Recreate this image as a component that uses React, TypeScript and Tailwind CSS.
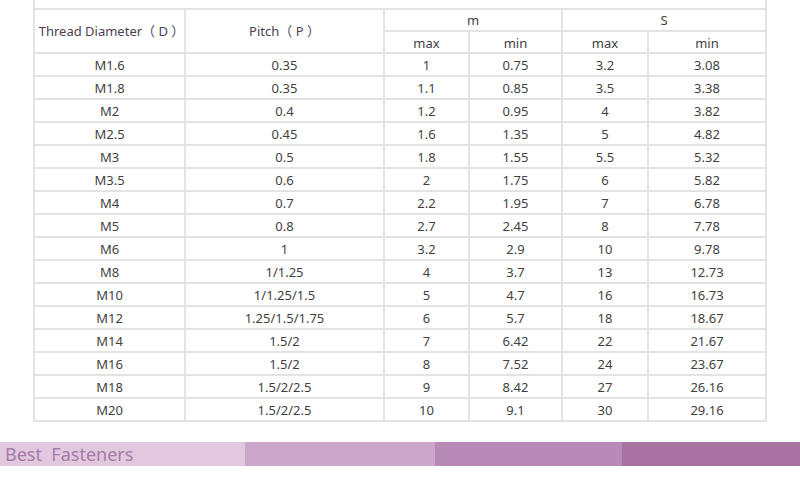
const rows: string[][] = [
  ['M1.6', '0.35', '1', '0.75', '3.2', '3.08'],
  ['M1.8', '0.35', '1.1', '0.85', '3.5', '3.38'],
  ['M2', '0.4', '1.2', '0.95', '4', '3.82'],
  ['M2.5', '0.45', '1.6', '1.35', '5', '4.82'],
  ['M3', '0.5', '1.8', '1.55', '5.5', '5.32'],
  ['M3.5', '0.6', '2', '1.75', '6', '5.82'],
  ['M4', '0.7', '2.2', '1.95', '7', '6.78'],
  ['M5', '0.8', '2.7', '2.45', '8', '7.78'],
  ['M6', '1', '3.2', '2.9', '10', '9.78'],
  ['M8', '1/1.25', '4', '3.7', '13', '12.73'],
  ['M10', '1/1.25/1.5', '5', '4.7', '16', '16.73'],
  ['M12', '1.25/1.5/1.75', '6', '5.7', '18', '18.67'],
  ['M14', '1.5/2', '7', '6.42', '22', '21.67'],
  ['M16', '1.5/2', '8', '7.52', '24', '23.67'],
  ['M18', '1.5/2/2.5', '9', '8.42', '27', '26.16'],
  ['M20', '1.5/2/2.5', '10', '9.1', '30', '29.16'],
];

export default function App() {
  return (
    <div
      className="h-[478px] w-[800px] bg-white"
      style={{ fontFamily: '"Noto Sans", "Noto Sans CJK SC", sans-serif' }}
    >
      {/* Spec table */}
      <div className="ml-[33px] w-[734px] bg-[#e3e3e3] px-[2px] pb-[2px]">
        <div className="grid grid-cols-[149px_197px_83px_91px_84px_116px] gap-[2px] text-[13px] leading-none text-[#3f3f3f]">
          <div className="col-span-6 h-[8px] bg-white" />

          <div className="row-span-2 flex items-center justify-center whitespace-pre bg-white pl-[4px] pt-[1px] text-[#4d3f52]">
            Thread Diameter（ D ）
          </div>
          <div className="row-span-2 flex items-center justify-center whitespace-pre bg-white pt-[1px] text-[#4d3f52]">
            Pitch（ P ）
          </div>
          <div className="col-span-2 flex h-[20px] items-center justify-center bg-white">m</div>
          <div className="col-span-2 flex h-[20px] items-center justify-center bg-white">S</div>
          <div className="flex h-[20px] items-center justify-center bg-white pt-[2px]">max</div>
          <div className="flex h-[20px] items-center justify-center bg-white pt-[2px]">min</div>
          <div className="flex h-[20px] items-center justify-center bg-white pt-[2px]">max</div>
          <div className="flex h-[20px] items-center justify-center bg-white pt-[2px]">min</div>

          {rows.map((r) =>
            r.map((v, i) => (
              <div key={r[0] + i} className="flex h-[21px] items-center justify-center bg-white pt-[2px]">
                {v}
              </div>
            ))
          )}
        </div>
      </div>

      {/* Footer bar */}
      <div className="mt-[20px] flex h-[24px]">
        <div className="flex w-[245px] items-center bg-[#e2c8df] pl-[5px] text-[18px] leading-none text-[#a57aa6]">
          Best&nbsp; Fasteners
        </div>
        <div className="w-[190px] bg-[#cba8cb]" />
        <div className="w-[187px] bg-[#b78ab7]" />
        <div className="flex-1 bg-[#a673a3]" />
      </div>
    </div>
  );
}
